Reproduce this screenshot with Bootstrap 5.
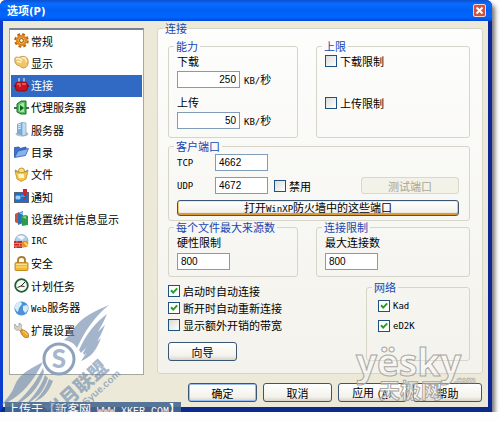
<!DOCTYPE html>
<html lang="zh-CN">
<head>
<meta charset="utf-8">
<meta name="viewport" content="width=device-width, initial-scale=1">
<title>选项</title>
<link href="https://cdn.jsdelivr.net/npm/bootstrap@5.3.0/dist/css/bootstrap.min.css" rel="stylesheet">
<style>
body{background:#fdfdfd;font:11px/12px "Noto Sans CJK SC",sans-serif;color:#000}
.en{font-family:"DejaVu Sans Mono",monospace;font-size:9px}
.page-wrap{padding:0 8px 0 0}
.dlg{background:#ece9d8;border:solid #0a3ccd;border-width:0 4px 5px 3px;border-right-color:#0c2597;border-bottom-color:#0c2a8c;border-radius:6px 6px 0 0;box-shadow:3px 4px 4px #777}
.dlg-title{height:21px;margin:0 -4px 0 -3px;padding:4px 6px 0 7px;border-radius:6px 6px 0 0;background:linear-gradient(#0a50d0,#0a6cff 4px,#0060f4 10px,#0066ff 17px,#0048d8);color:#fff;font-size:11px;font-weight:700}
.dlg-title .en{font-family:"DejaVu Sans",sans-serif;font-size:10px}
.x-btn{width:13px;height:13px;border:1px solid #f4d5d0;border-radius:2px;background:#d2513f;padding:0;line-height:0}
.x-btn svg{display:block;margin:auto}
.dlg-main{padding:1px 5px 0 6px;gap:13px}
.side{width:135px;margin:6px 0 -1px;background:#fff;border:1px solid #a5a89c;border-top:2px solid #77828e;padding:0 1px}
.side-list{display:grid;grid-template-rows:repeat(14,1fr);height:312px}
.side-list a{display:flex;align-items:center;gap:2px;padding:0 3px 1px;color:#000;text-decoration:none}
.side-list a.active{background:#316ac5;color:#fff}
.side-list svg{width:15px;height:15px;flex:none}
fieldset{border:1px solid #d5d5c8;border-radius:3px;min-width:0}
legend{float:none;width:auto;margin:0 0 0 -3px;padding:0 2px;font-size:11px;line-height:12px;color:#1546b4}
.panel{background:linear-gradient(#fdfdfc,#f3f2ec);padding:6px 12px 12px 10px}
.panel>legend{margin-left:-5px}
.two{display:grid;grid-template-columns:130fr 154fr;column-gap:18px}
.gbox{padding:3px 10px 8px 8px}
.port-box{padding:2px 10px 4px 8px;margin-top:2px}
.port-lbl{width:38px}
.port-row{margin:6px 0}
.port-row .ck{margin-left:6px}
.cap-box{padding:3px 10px 6px 8px}
.cap-in{margin-top:5px}
.low-row{margin-top:4px}
.low-left{gap:5px;padding-top:4px}
.low-left .pbtn{margin-top:6px}
.limit-up{margin-top:30px}
.net-box{width:104px;padding:7px 10px 27px 11px}
.net-box legend{margin-left:-6px}
.fld{height:17px;border:1px solid #7f9db9;border-radius:0;background:#fff;padding:0 3px;font:10px/12px "Liberation Sans",sans-serif;color:#000;width:53px;min-height:0}
.fld-w{width:63px;text-align:right}
.chk{appearance:none;width:12px;height:12px;flex:none;margin:0;border:1px solid #1c5180;background:linear-gradient(135deg,#dcdcd7,#fff)}
.chk:checked{background:url("data:image/svg+xml,%3Csvg xmlns='http://www.w3.org/2000/svg' viewBox='0 0 10 10'%3E%3Cpath d='M2 4.3 4.2 6.6 8.2 2.4' fill='none' stroke='%2321a121' stroke-width='2'/%3E%3C/svg%3E") #fff}
.ck{display:flex;align-items:center;gap:3px;height:12px}
.pbtn{width:69px;height:19px;border:1px solid #3b5674;border-radius:3px;background:linear-gradient(#fff,#f3f2ec 75%,#d9d4c8);padding:0;font-size:11px;line-height:12px;color:#000}
.pbtn-def{box-shadow:inset 0 0 0 1px #9dbdf0}
.pbtn-hot{width:100%;height:16px;box-shadow:inset 0 -2px 0 #dc9a30,inset 0 1px 0 #fde6b8,inset 1px 0 0 #f3c56c,inset -1px 0 0 #f3c56c}
.pbtn:disabled{width:98px;height:17px;border-color:#dad8c6;background:#f3f2e9;color:#a7a695}
.foot{padding:9px 6px 5px;gap:6px}
.stamp{position:absolute;left:5px;top:402px;width:176px;height:14px;background:#47698fe8;color:#fff;font-size:12px;line-height:14px;padding-left:2px;white-space:nowrap}
.stamp .en{font-family:"Liberation Mono",monospace;font-size:10px}
.over{position:absolute;pointer-events:none}
.over-wing{left:0;top:300px}
.over-sky{left:350px;top:320px}
</style>
<script src="https://cdn.jsdelivr.net/npm/bootstrap@5.3.0/dist/js/bootstrap.bundle.min.js"></script>
</head>
<body>
<div class="page-wrap position-relative">
<main class="dlg">
  <header class="dlg-title d-flex justify-content-between">
    <span>选项<span class="en">(P)</span></span>
    <button class="x-btn" type="button" aria-label="关闭"><svg width="9" height="9" viewBox="0 0 9 9"><path d="M1.5 1.5l6 6M7.5 1.5l-6 6" stroke="#fff" stroke-width="2"/></svg></button>
  </header>
  <div class="dlg-main d-flex">
    <nav class="side flex-shrink-0">
      <div class="side-list">
        <a href="#"><svg viewBox="0 0 15 15"><circle cx="7.5" cy="7.5" r="6" fill="none" stroke="#b8640c" stroke-width="2.6" stroke-dasharray="2.7 2"/><circle cx="7.5" cy="7.5" r="4.4" fill="#f7c568" stroke="#dc8a22" stroke-width="2.6"/><circle cx="7.5" cy="7.5" r="2" fill="#fff0c8" stroke="#9a4c08"/></svg>常规</a>
        <a href="#"><svg viewBox="0 0 15 15"><path d="M.8 4C1 1.5 3.5 2 5 2.5 8 .5 13 1 14 5c.8 4-1 7.500-4 8-3 0-3.500-2-5.500-2.500C1.500 10 .5 6.500.8 4z" fill="#f0c768" stroke="#b98a3c" stroke-width=".8"/><path d="M2 4c3-1 5 0 6 2M3 7c2-1 4 0 4 1M8 3c3-1 5 2 4 4" fill="none" stroke="#fff3cc" stroke-width="1.400"/></svg>显示</a>
        <a href="#" class="active"><svg viewBox="0 0 15 15"><path d="M5 0v5M10 0v5" stroke="#e9d9dd" stroke-width="1.200"/><path d="M0 8h15" stroke="#8b1020" stroke-width="2"/><rect x="1.500" y="4" width="12" height="9" rx="3" fill="#c81420" stroke="#7c0812" stroke-width=".8"/><path d="M3 6h3v3M8 6h4" stroke="#f26a68" stroke-width="1.300" fill="none"/></svg>连接</a>
        <a href="#"><svg viewBox="0 0 15 15"><path d="M0 8h3M12 8h3" stroke="#4b6d50" stroke-width="2"/><path d="M3 4l4-3h5v13H7L3 12z" fill="#52bd5c" stroke="#176e28"/><path d="M5 5l3-2h2v9H7l-2-1z" fill="#a4e8a0"/><path d="M6 5l4 3-4 3z" fill="#145e22"/></svg>代理服务器</a>
        <a href="#"><svg viewBox="0 0 15 15"><ellipse cx="8" cy="12" rx="6.500" ry="2.500" fill="#b8c0c8"/><path d="M3 2l5-2v13l-5-1z" fill="#78aedb"/><path d="M8 0l4 1v12l-4 1z" fill="#c2dcf0" stroke="#6c95ba" stroke-width=".6"/><path d="M4 3l3-1M4 5l3-1M4 7l3-1" stroke="#dff1ff"/></svg>服务器</a>
        <a href="#"><svg viewBox="0 0 15 15"><path d="M.5 12V2.500L5 2l1 1.500 6-1.500v3" fill="#3f72c6" stroke="#2450a0" stroke-width=".8"/><path d="M.5 12.500L4 6l10.500-2.500-3 7z" fill="#84b4f0" stroke="#2c5cb4" stroke-width=".8"/></svg>目录</a>
        <a href="#"><svg viewBox="0 0 15 15"><circle cx="7.500" cy="4" r="3" fill="#f8e08a" stroke="#c59324"/><path d="M1 4c4 2 9 2 13 0l-2 8-5 2.500L3 12z" fill="#f2c64c" stroke="#ba8416" stroke-width=".7"/><path d="M4 7h6v4H5z" fill="#fff4c4"/><path d="M1 3l3 2M11 5l3-2" stroke="#8e94a2" stroke-width="1.500"/></svg>文件</a>
        <a href="#"><svg viewBox="0 0 15 15"><path d="M0 3h15v11H0z" fill="#556476"/><path d="M1 5h12v7H1z" fill="#1d6ec4"/><path d="M2 7h4v3H2zM7 7h4" fill="#9ad0ff" stroke="#9ad0ff" stroke-width=".8"/><path d="M9 0h4v3l-1 4h-2L9 3zM10 8h2v2h-2z" fill="#d81f28"/></svg>通知</a>
        <a href="#"><svg viewBox="0 0 15 15"><path d="M1 3l4-2v12l-4-2z" fill="#d84c34"/><path d="M4 2l5-2v12l-5 2z" fill="#2476bb"/><path d="M5 2l4-1v3z" fill="#8ac8f2"/><path d="M7 5l5-1 2 1v9l-6 1z" fill="#2d9b4a"/><path d="M8 6l4-1v3z" fill="#7ed68c"/></svg>设置统计信息显示</a>
        <a href="#"><svg viewBox="0 0 15 15"><circle cx="7.500" cy="7" r="6.500" fill="#afd0ec" stroke="#7499bd" stroke-width=".7"/><path d="M3 3c2-2 6-2 8 0l-3 3z" fill="#eef8ff"/><path d="M0 7h8v7H0z" fill="#c62c20"/><path d="M0 9.500h8M0 12h8M3 7v2M5.500 9.500V12M2 12v2" stroke="#f0a898" stroke-width=".7"/><circle cx="11" cy="10" r="3.300" fill="#f08c24"/><path d="M10 9h2v2h3" stroke="#fff0b0" fill="none"/></svg><span class="en">IRC</span></a>
        <a href="#"><svg viewBox="0 0 15 15"><path d="M4 7V4c0-4 7-4 7 0v3" fill="none" stroke="#a87c28" stroke-width="1.800"/><rect x="1" y="6.500" width="13" height="8" rx="1" fill="#f5b92e" stroke="#b47a10" stroke-width=".8"/><path d="M2 8.500h11M2 11h11" stroke="#fde08a"/></svg>安全</a>
        <a href="#"><svg viewBox="0 0 15 15"><circle cx="7.500" cy="7.500" r="6.300" fill="#f4faf1" stroke="#235c35" stroke-width="1.800"/><path d="M3.500 9.500L7 8l4-4M7 8l3.500.5" stroke="#252525" fill="none"/></svg>计划任务</a>
        <a href="#"><svg viewBox="0 0 15 15"><circle cx="7.500" cy="7.500" r="7" fill="#4e91d8"/><path d="M2 3c3-3 6-2 6 0L5 7 4 11C1 9 0 6 2 3zM9 5l4-1c2 3 1 6-2 8L9 9z" fill="#d5ecfb"/></svg><span><span class="en">Web</span>服务器</span></a>
        <a href="#"><svg viewBox="0 0 15 15"><path d="M1 1l2 3 2-1V0c3 1 3 3 2 5l4 4-2 2-4-4C2 8 0 6 0 3z" fill="#d5d3cc" stroke="#8c8982" stroke-width=".6"/><path d="M7 7c3-1 8 3 8 6 0 2-3 2-5 1-2-2-4-4-3-7z" fill="#eda42c" stroke="#a86410" stroke-width=".7"/><path d="M9 8c2 1 4 3 4 4" stroke="#ffe09a" fill="none"/></svg>扩展设置</a>
      </div>
    </nav>
    <fieldset class="panel flex-fill">
      <legend>连接</legend>
      <div class="two">
        <fieldset class="gbox">
          <legend>能力</legend>
          <label class="d-block" for="down">下载</label>
          <div class="d-flex align-items-center gap-1 mt-1 mb-2"><input class="fld fld-w" id="down" value="250"><span><span class="en">KB/</span>秒</span></div>
          <label class="d-block" for="up">上传</label>
          <div class="d-flex align-items-center gap-1 mt-1"><input class="fld fld-w" id="up" value="50"><span><span class="en">KB/</span>秒</span></div>
        </fieldset>
        <fieldset class="gbox">
          <legend>上限</legend>
          <label class="ck"><input class="chk" type="checkbox">下载限制</label>
          <label class="ck limit-up"><input class="chk" type="checkbox">上传限制</label>
        </fieldset>
      </div>
      <fieldset class="port-box">
        <legend>客户端口</legend>
        <div class="d-flex align-items-center"><label class="en port-lbl" for="tcp">TCP</label><input class="fld" id="tcp" value="4662"></div>
        <div class="d-flex align-items-center port-row"><label class="en port-lbl" for="udp">UDP</label><input class="fld" id="udp" value="4672"><label class="ck"><input class="chk" type="checkbox">禁用</label><button class="pbtn ms-auto" type="button" disabled>测试端口</button></div>
        <button class="pbtn pbtn-hot d-block" type="button">打开<span class="en">WinXP</span>防火墙中的这些端口</button>
      </fieldset>
      <div class="two">
        <fieldset class="cap-box"><legend>每个文件最大来源数</legend><label class="d-block" for="hard">硬性限制</label><input class="fld d-block cap-in" id="hard" value="800"></fieldset>
        <fieldset class="cap-box"><legend>连接限制</legend><label class="d-block" for="maxc">最大连接数</label><input class="fld d-block cap-in" id="maxc" value="800"></fieldset>
      </div>
      <div class="d-flex justify-content-between low-row">
        <div class="d-flex flex-column low-left">
          <label class="ck"><input class="chk" type="checkbox" checked>启动时自动连接</label>
          <label class="ck"><input class="chk" type="checkbox" checked>断开时自动重新连接</label>
          <label class="ck"><input class="chk" type="checkbox">显示额外开销的带宽</label>
          <button class="pbtn" type="button">向导</button>
        </div>
        <fieldset class="net-box"><legend>网络</legend>
          <label class="ck"><input class="chk" type="checkbox" checked><span class="en">Kad</span></label>
          <label class="ck mt-2"><input class="chk" type="checkbox" checked><span class="en">eD2K</span></label>
        </fieldset>
      </div>
    </fieldset>
  </div>
  <footer class="foot d-flex justify-content-end">
    <button class="pbtn pbtn-def" type="button">确定</button>
    <button class="pbtn" type="button">取消</button>
    <button class="pbtn" type="button">应用 <span class="en">(<u>A</u>)</span></button>
    <button class="pbtn" type="button">帮助</button>
  </footer>
</main>
<div class="stamp">上传于【新客网<span class="en"> WWW.XKER.COM</span>】</div>
<svg class="over over-wing" width="130" height="121" viewBox="0 300 130 121" fill="#6a86ab" fill-opacity=".62">
  <path d="M109 305C95 311 82 317 75 327c-4 6-6 9-11 13 6 1 10 3 13 8 8-17 17-31 32-43z"/>
  <path d="M107 314c-11 8-21 20-28 36l2 3c9-9 18-20 26-39zM105 325c-8 7-16 17-22 28l1 2c9-7 15-14 21-30zM101 338c-6 5-11 10-16 17l-4 6c10-4 15-10 20-23z"/>
  <path d="M43 362C30 369 19 374 15 385 12 393 7 399 1 405c14-5 29-17 42-43z"/>
  <path d="M43 368C35 384 25 396 13 406c14-6 25-16 31-34zM45 375c-4 12-12 22-20 30 12-6 19-14 23-27zM49 379c-3 9-8 16-15 23 10-4 15-11 19-21z"/>
  <circle cx="59" cy="359" r="15" fill="#fff" fill-opacity=".75" stroke="#8ea2bd" stroke-width="3"/>
  <text x="59" y="368" text-anchor="middle" font-family="Lato,sans-serif" font-weight="900" font-size="26">S</text>
  <text transform="translate(53 420) rotate(-42)" font-family="Noto Sans CJK SC,sans-serif" font-weight="900" font-size="19">岁月联盟</text>
  <text transform="translate(86 406) rotate(-42)" font-family="Liberation Sans,sans-serif" font-weight="700" font-size="10">Syue.com</text>
</svg>
<svg class="over over-sky" width="135" height="90" viewBox="350 320 135 90" fill="#fff" fill-opacity=".35" stroke="#a9a7a3" stroke-width="1">
  <text x="356" y="376" font-family="Open Sans,sans-serif" font-weight="700" font-size="37">yësky</text>
  <text x="454" y="383" font-family="Open Sans,sans-serif" font-weight="700" font-size="9" stroke-width=".6">.com</text>
  <text x="379" y="398" font-family="Noto Sans CJK SC,sans-serif" font-weight="700" font-size="21">天极网</text>
</svg>
</div>
</body>
</html>
